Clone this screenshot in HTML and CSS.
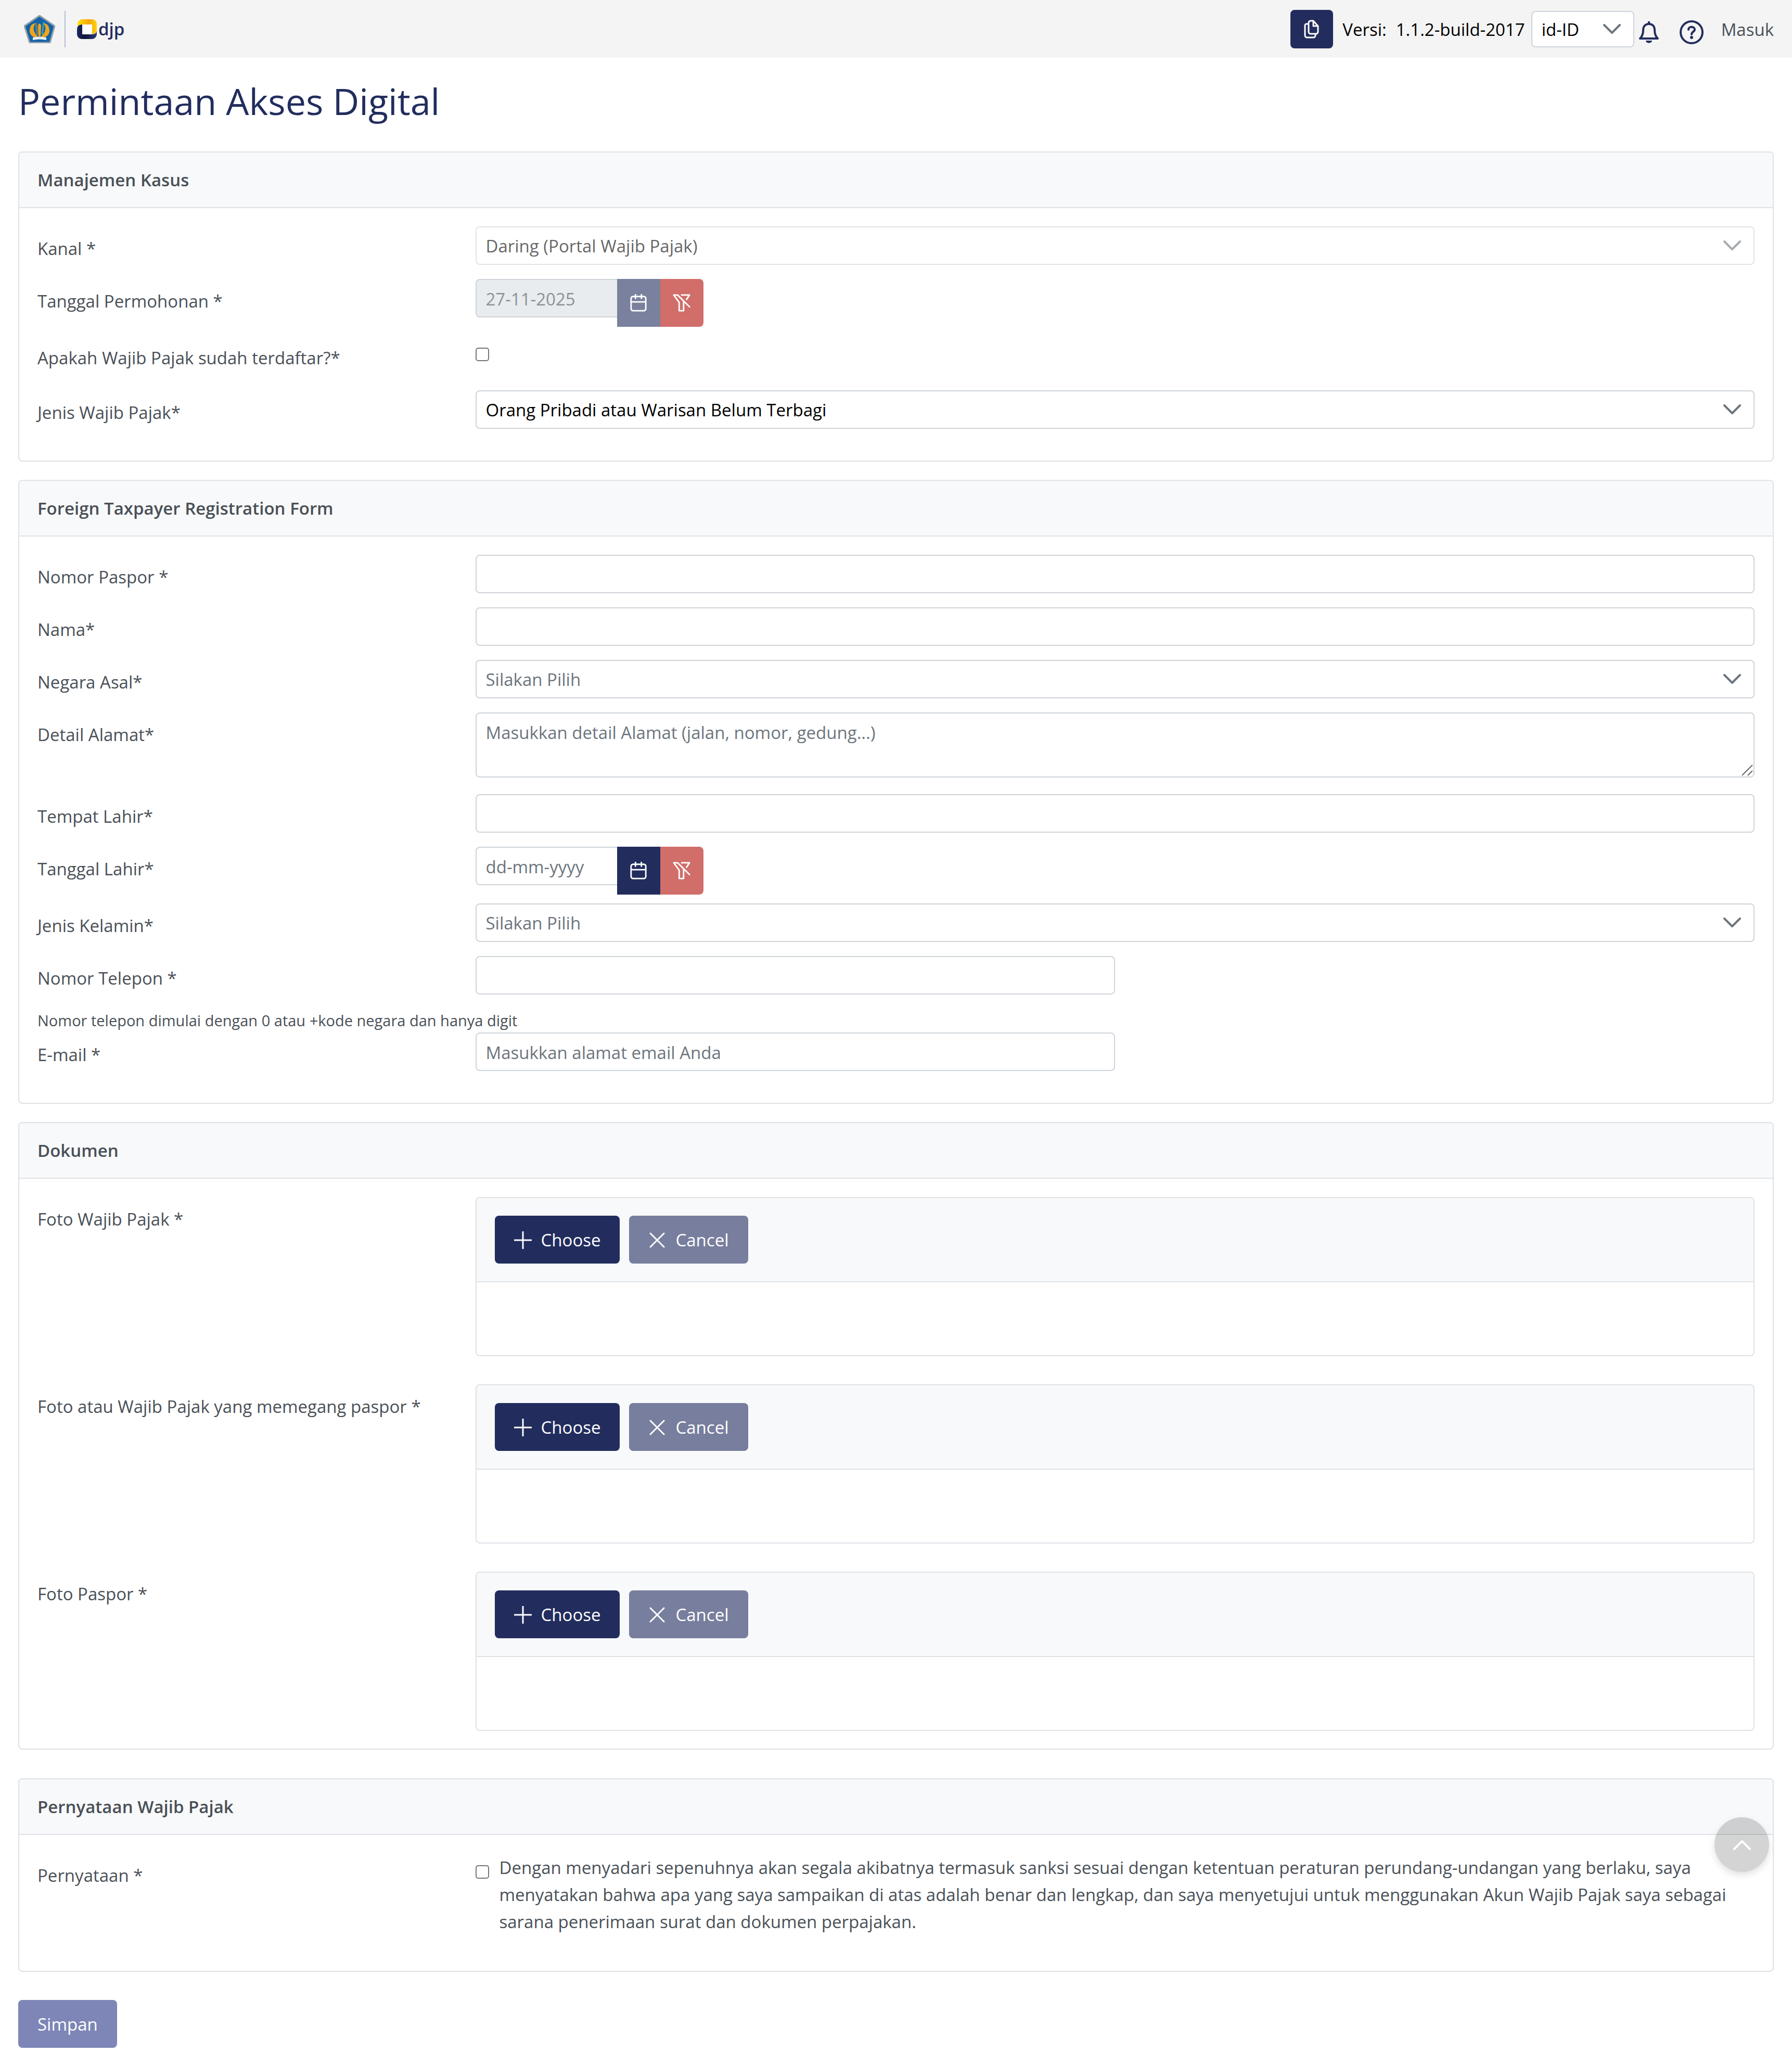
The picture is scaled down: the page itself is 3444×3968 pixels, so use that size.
FILE: index.html
```html
<!DOCTYPE html>
<html lang="id">
<head>
    <meta charset="UTF-8">
    <meta name="viewport" content="width=device-width, initial-scale=1.0">
    <title>Permintaan Akses Digital</title>
    <link rel="stylesheet" href="styles.css">
</head>
<body>

    <!-- Icon sprite -->
    <svg class="sprite" aria-hidden="true">
        <symbol id="icon-chevron" viewBox="0 0 34 20"><path d="M2 2 L17 17 L32 2"/></symbol>
        <symbol id="icon-chevron-up" viewBox="0 0 34 20"><path d="M2 18 L17 3 L32 18"/></symbol>
        <symbol id="icon-plus" viewBox="0 0 34 34"><path d="M17 1 V33 M1 17 H33"/></symbol>
        <symbol id="icon-times" viewBox="0 0 34 34"><path d="M4 4 L30 30 M30 4 L4 30"/></symbol>
        <symbol id="icon-calendar" viewBox="0 0 36 36">
            <path d="M7 5 H29 A4 4 0 0 1 33 9 V30 A4 4 0 0 1 29 34 H7 A4 4 0 0 1 3 30 V9 A4 4 0 0 1 7 5 Z M3 16 H33 M12 1 V9 M24 1 V9"/>
        </symbol>
        <symbol id="icon-filter-slash" viewBox="0 0 36 36">
            <path d="M18 2 H34 L28 11 M34 26 L10 2 H2 L13 17 V34 H22 V15"/>
        </symbol>
        <symbol id="icon-copy" viewBox="0 0 30 36">
            <path d="M18 2 H13 A4 4 0 0 0 9 6 V23 A4 4 0 0 0 13 27 H23 A4 4 0 0 0 27 23 V12 Z M18 2 V12 H27 M9 8 H5 A3 3 0 0 0 2 11 V30 A4 4 0 0 0 6 34 H18 A4 4 0 0 0 22 30 V27"/>
        </symbol>
        <symbol id="icon-bell" viewBox="0 0 38 42">
            <path d="M19 1 V5 M19 5 C11 5 8 11 8 17 C8 25 6 29 2 33 H36 C32 29 30 25 30 17 C30 11 27 5 19 5 Z"/>
            <path class="solid" d="M13 37 H25 C25 43 13 43 13 37 Z"/>
        </symbol>
        <symbol id="icon-question" viewBox="0 0 46 46">
            <circle cx="23" cy="23" r="21"/>
            <path d="M17 18 C17 11 29 11 29 18 C29 22 23 22 23 27"/>
            <circle class="solid" cx="23" cy="33" r="3"/>
        </symbol>
    </svg>

    <header class="topbar">
        <a class="brand" href="#" aria-label="djp">
            <svg class="emblem" viewBox="0 0 60 54">
                <path d="M30 1 L59 21 L50 53 H11 L1 21 Z" fill="#1263a8" stroke="#98a0a8" stroke-width="3"/>
                <path d="M26 42 C17 43 9 35 13 24 Q14 19 20 17 C15 26 19 35 26 42 Z M34 42 C43 43 51 35 47 24 Q46 19 40 17 C45 26 41 35 34 42 Z" fill="#efa41c" stroke="#efa41c" stroke-width="2"/>
                <path d="M27 20 Q30 12 33 20 L32 41 H28 Z" fill="#e9a126"/>
                <path d="M23 15 L26 38" stroke="#67816e" stroke-width="4" fill="none"/>
                <path d="M38 14 L35 38" stroke="#46c3b4" stroke-width="3" stroke-dasharray="2 1" fill="none"/>
                <path d="M17 43 Q30 40 43 43 V48 Q30 45 17 48 Z" fill="#e8eef2"/>
            </svg>
            <span class="brand-divider"></span>
            <svg class="mark" viewBox="0 0 38 38">
                <defs>
                    <linearGradient id="gold" x1="0" y1="0" x2="1" y2="0">
                        <stop offset="0" stop-color="#ffe000"/>
                        <stop offset="0.6" stop-color="#f3a712"/>
                        <stop offset="1" stop-color="#ffd400"/>
                    </linearGradient>
                    <linearGradient id="navy" x1="0" y1="0" x2="1" y2="0">
                        <stop offset="0" stop-color="#1d2760"/>
                        <stop offset="0.4" stop-color="#10143a"/>
                        <stop offset="1" stop-color="#2b3a80"/>
                    </linearGradient>
                </defs>
                <path d="M1 14 V9 A9 9 0 0 1 10 0 H29 A9 9 0 0 1 38 9 V20 Q38 27 29 29 V10 H10 Q3 10 1 14 Z" fill="url(#gold)"/>
                <path d="M10 10 Q0 10 0 20 V29 A9 9 0 0 0 9 38 H29 A9 9 0 0 0 38 29 V22 Q37 29 29 29 H10 Z" fill="url(#navy)"/>
                <path d="M10 10 H29 V29 H10 Z" fill="#fff"/>
            </svg>
            <span class="brand-name">djp</span>
        </a>

        <div class="topbar-right">
            <button class="btn btn-copy" type="button" aria-label="Salin versi">
                <svg class="icon icon-copy"><use href="#icon-copy"/></svg>
            </button>
            <span class="version">Versi:</span>
            <span class="version">1.1.2-build-2017</span>
            <div class="select-wrap lang">
                <select class="control" aria-label="Bahasa">
                    <option>id-ID</option>
                    <option>en-US</option>
                </select>
                <svg class="chevron"><use href="#icon-chevron"/></svg>
            </div>
            <a class="icon-link" href="#" aria-label="Notifikasi"><svg class="icon icon-bell"><use href="#icon-bell"/></svg></a>
            <a class="icon-link icon-link-help" href="#" aria-label="Bantuan"><svg class="icon icon-question"><use href="#icon-question"/></svg></a>
            <a class="login" href="#">Masuk</a>
        </div>
    </header>

    <main class="page">
        <h1>Permintaan Akses Digital</h1>

        <form>
            <section class="panel">
                <h2 class="panel-header">Manajemen Kasus</h2>
                <div class="panel-body">
                    <div class="row">
                        <label for="kanal">Kanal *</label>
                        <div class="select-wrap is-disabled">
                            <select class="control" id="kanal" disabled>
                                <option>Daring (Portal Wajib Pajak)</option>
                            </select>
                            <svg class="chevron"><use href="#icon-chevron"/></svg>
                        </div>
                    </div>
                    <div class="row">
                        <label for="tanggalPermohonan">Tanggal Permohonan *</label>
                        <div class="date-group">
                            <input class="control" type="text" id="tanggalPermohonan" value="27-11-2025" disabled>
                            <button class="btn btn-calendar btn-muted" type="button" aria-label="Pilih tanggal" disabled><svg class="icon"><use href="#icon-calendar"/></svg></button>
                            <button class="btn btn-clear" type="button" aria-label="Hapus tanggal" disabled><svg class="icon"><use href="#icon-filter-slash"/></svg></button>
                        </div>
                    </div>
                    <div class="row row-check">
                        <label for="terdaftar">Apakah Wajib Pajak sudah terdaftar?*</label>
                        <div class="check-cell"><input class="checkbox" type="checkbox" id="terdaftar"></div>
                    </div>
                    <div class="row">
                        <label for="jenisWp">Jenis Wajib Pajak*</label>
                        <div class="select-wrap">
                            <select class="control" id="jenisWp">
                                <option>Orang Pribadi atau Warisan Belum Terbagi</option>
                            </select>
                            <svg class="chevron"><use href="#icon-chevron"/></svg>
                        </div>
                    </div>
                </div>
            </section>

            <section class="panel">
                <h2 class="panel-header">Foreign Taxpayer Registration Form</h2>
                <div class="panel-body">
                    <div class="row">
                        <label for="paspor">Nomor Paspor *</label>
                        <input class="control" type="text" id="paspor">
                    </div>
                    <div class="row">
                        <label for="nama">Nama*</label>
                        <input class="control" type="text" id="nama">
                    </div>
                    <div class="row">
                        <label for="negara">Negara Asal*</label>
                        <div class="select-wrap">
                            <select class="control is-placeholder" id="negara">
                                <option>Silakan Pilih</option>
                            </select>
                            <svg class="chevron"><use href="#icon-chevron"/></svg>
                        </div>
                    </div>
                    <div class="row row-area">
                        <label for="alamat">Detail Alamat*</label>
                        <div class="area-wrap">
                            <textarea class="control" id="alamat" placeholder="Masukkan detail Alamat (jalan, nomor, gedung...)"></textarea>
                            <svg class="grip" viewBox="0 0 22 22"><path d="M1 21 L21 1 M12 21 L21 12"/></svg>
                        </div>
                    </div>
                    <div class="row">
                        <label for="tempatLahir">Tempat Lahir*</label>
                        <input class="control" type="text" id="tempatLahir">
                    </div>
                    <div class="row">
                        <label for="tanggalLahir">Tanggal Lahir*</label>
                        <div class="date-group">
                            <input class="control" type="text" id="tanggalLahir" placeholder="dd-mm-yyyy">
                            <button class="btn btn-calendar" type="button" aria-label="Pilih tanggal"><svg class="icon"><use href="#icon-calendar"/></svg></button>
                            <button class="btn btn-clear" type="button" aria-label="Hapus tanggal"><svg class="icon"><use href="#icon-filter-slash"/></svg></button>
                        </div>
                    </div>
                    <div class="row">
                        <label for="kelamin">Jenis Kelamin*</label>
                        <div class="select-wrap">
                            <select class="control is-placeholder" id="kelamin">
                                <option>Silakan Pilih</option>
                            </select>
                            <svg class="chevron"><use href="#icon-chevron"/></svg>
                        </div>
                    </div>
                    <div class="row">
                        <label for="telepon">Nomor Telepon *</label>
                        <input class="control half" type="tel" id="telepon">
                    </div>
                    <p class="hint">Nomor telepon dimulai dengan 0 atau +kode negara dan hanya digit</p>
                    <div class="row">
                        <label for="email">E-mail *</label>
                        <input class="control half" type="email" id="email" placeholder="Masukkan alamat email Anda">
                    </div>
                </div>
            </section>

            <section class="panel panel-docs">
                <h2 class="panel-header">Dokumen</h2>
                <div class="panel-body">
                    <div class="row">
                        <label for="fotoWp">Foto Wajib Pajak *</label>
                        <div class="upload">
                            <div class="upload-bar">
                                <button class="btn" type="button" id="fotoWp"><svg class="icon"><use href="#icon-plus"/></svg>Choose</button>
                                <button class="btn btn-cancel" type="button" disabled><svg class="icon"><use href="#icon-times"/></svg>Cancel</button>
                            </div>
                            <div class="upload-content"></div>
                        </div>
                    </div>
                    <div class="row">
                        <label for="fotoMemegang">Foto atau Wajib Pajak yang memegang paspor *</label>
                        <div class="upload">
                            <div class="upload-bar">
                                <button class="btn" type="button" id="fotoMemegang"><svg class="icon"><use href="#icon-plus"/></svg>Choose</button>
                                <button class="btn btn-cancel" type="button" disabled><svg class="icon"><use href="#icon-times"/></svg>Cancel</button>
                            </div>
                            <div class="upload-content"></div>
                        </div>
                    </div>
                    <div class="row">
                        <label for="fotoPaspor">Foto Paspor *</label>
                        <div class="upload">
                            <div class="upload-bar">
                                <button class="btn" type="button" id="fotoPaspor"><svg class="icon"><use href="#icon-plus"/></svg>Choose</button>
                                <button class="btn btn-cancel" type="button" disabled><svg class="icon"><use href="#icon-times"/></svg>Cancel</button>
                            </div>
                            <div class="upload-content"></div>
                        </div>
                    </div>
                </div>
            </section>

            <section class="panel panel-statement">
                <h2 class="panel-header">Pernyataan Wajib Pajak</h2>
                <div class="panel-body">
                    <div class="row">
                        <label for="pernyataan">Pernyataan *</label>
                        <div class="statement">
                            <input class="checkbox" type="checkbox" id="pernyataan">
                            <p>Dengan menyadari sepenuhnya akan segala akibatnya termasuk sanksi sesuai dengan ketentuan peraturan perundang-undangan yang berlaku, saya menyatakan bahwa apa yang saya sampaikan di atas adalah benar dan lengkap, dan saya menyetujui untuk menggunakan Akun Wajib Pajak saya sebagai sarana penerimaan surat dan dokumen perpajakan.</p>
                        </div>
                    </div>
                </div>
            </section>

            <button class="btn btn-save" type="submit" disabled>Simpan</button>
        </form>
    </main>

    <button class="scroll-top" type="button" aria-label="Kembali ke atas">
        <svg class="chevron-up"><use href="#icon-chevron-up"/></svg>
    </button>

</body>
</html>
```

FILE: styles.css
```css
* {
    box-sizing: border-box;
}
body {
    font-family: 'Segoe UI', 'Open Sans', 'Noto Sans', sans-serif;
    font-size: 33px;
    line-height: 52px;
    margin: 0;
    background-color: #fff;
    color: #495057;
}
.sprite {
    display: none;
}
svg {
    display: block;
    flex-shrink: 0;
}

/* Top bar */
.topbar {
    display: flex;
    align-items: center;
    justify-content: space-between;
    height: 111px;
    padding: 0 35px 0 46px;
    background-color: #f4f4f4;
}
.brand {
    display: flex;
    align-items: center;
    text-decoration: none;
}
.emblem {
    width: 60px;
    height: 54px;
}
.brand-divider {
    width: 2px;
    height: 70px;
    margin: 0 22px 0 18px;
    background-color: #b4bccf;
}
.mark {
    width: 38px;
    height: 38px;
}
.brand-name {
    margin-left: 3px;
    font-size: 33px;
    font-weight: 600;
    color: #222d5e;
}
.topbar-right {
    display: flex;
    align-items: center;
}
.version {
    margin-left: 18px;
    padding-top: 2px;
    color: #000;
}
.lang {
    width: 198px;
    margin-left: 12px;
}
.topbar .lang .control {
    height: 70px;
}
.icon-link {
    margin-left: 9px;
    padding-top: 12px;
    color: #222d5e;
}
.icon-link-help {
    margin: 0 34px 0 40px;
}
.login {
    padding-top: 2px;
    color: #495057;
    text-decoration: none;
}

/* Icons */
.icon {
    width: 34px;
    height: 34px;
    fill: none;
    stroke: currentColor;
    stroke-width: 3px;
    stroke-linecap: round;
    stroke-linejoin: round;
}
.solid {
    fill: currentColor;
    stroke: none;
}
.icon-copy {
    width: 30px;
    height: 36px;
}
.icon-bell {
    width: 38px;
    height: 42px;
    stroke-width: 4px;
}
.icon-question {
    width: 46px;
    height: 46px;
    stroke-width: 4px;
}

/* Page */
.page {
    padding: 36px 35px;
}
h1 {
    margin: 0 0 50px;
    font-size: 70px;
    font-weight: 400;
    line-height: 94px;
    color: #222d5e;
}
.panel {
    margin-bottom: 35px;
    border: 2px solid #dee2e6;
    border-radius: 8px;
}
.panel-header {
    margin: 0;
    padding: 27px 35px 26px;
    border-bottom: 2px solid #dee2e6;
    background-color: #f8f9fa;
    border-radius: 6px 6px 0 0;
    font-size: 33px;
    font-weight: 600;
    line-height: 52px;
}
.panel-body {
    padding: 35px 35px 34px;
}
.row {
    display: grid;
    grid-template-columns: minmax(0, 1fr) minmax(0, 3fr);
    column-gap: 22px;
    align-items: start;
    min-height: 84px;
    margin-bottom: 17px;
}
.row > label {
    padding-top: 17px;
}
.row-check {
    min-height: 88px;
}
.row-area {
    min-height: 140px;
}
.hint {
    margin: 0;
    font-size: 29px;
    line-height: 46px;
}

/* Form controls */
.control {
    display: block;
    width: 100%;
    height: 74px;
    padding: 2px 18px 0;
    border: 2px solid #ced4da;
    border-radius: 8px;
    background-color: #fff;
    color: #000;
    font-family: inherit;
    font-size: 33px;
    line-height: 52px;
    outline: none;
    appearance: none;
}
.control::placeholder {
    color: #6c757d;
    opacity: 1;
}
.control.is-placeholder {
    color: #6c757d;
}
.control:disabled {
    opacity: 1;
}
.half {
    width: 50%;
}
.select-wrap {
    position: relative;
}
.chevron {
    position: absolute;
    top: 50%;
    right: 26px;
    width: 34px;
    height: 20px;
    margin-top: -10px;
    fill: none;
    stroke: #6c757d;
    stroke-width: 4px;
    stroke-linecap: round;
    stroke-linejoin: round;
    pointer-events: none;
}
.is-disabled {
    opacity: 0.6;
}
.area-wrap {
    position: relative;
}
textarea.control {
    height: 125px;
    padding: 11px 18px;
    resize: none;
}
.grip {
    position: absolute;
    right: 3px;
    bottom: 3px;
    width: 22px;
    height: 22px;
    fill: none;
    stroke: #666;
    stroke-width: 2px;
}
.date-group {
    display: flex;
    align-items: flex-start;
}
.date-group .control {
    width: 272px;
    border-right: none;
    border-radius: 8px 0 0 8px;
}
.date-group .control:disabled {
    background-color: #e9ecef;
    color: #8d9195;
}
.checkbox {
    display: block;
    flex-shrink: 0;
    width: 26px;
    height: 26px;
    margin: 0;
    border: 2px solid #767676;
    border-radius: 5px;
    background-color: #fff;
    appearance: none;
}
.check-cell {
    padding-top: 23px;
}

/* Buttons */
.btn {
    display: flex;
    align-items: center;
    gap: 18px;
    height: 92px;
    padding: 2px 37px 0;
    border: none;
    border-radius: 8px;
    background-color: #222d5e;
    color: #fff;
    font-family: inherit;
    font-size: 33px;
    line-height: 52px;
    cursor: pointer;
}
.btn:disabled {
    cursor: default;
}
.btn-copy {
    width: 82px;
    height: 74px;
    padding: 0;
    justify-content: center;
}
.btn-calendar,
.btn-clear {
    width: 83px;
    padding: 0;
    justify-content: center;
    border-radius: 0;
}
.btn-muted {
    background-color: #7a819e;
}
.btn-clear {
    background-color: #d16e69;
    border-radius: 0 8px 8px 0;
}
.btn-cancel {
    background-color: #787e9d;
}
.btn-save {
    background-color: #7d86b7;
}

/* Uploads */
.upload {
    border: 2px solid #dee2e6;
    border-radius: 8px;
}
.upload-bar {
    display: flex;
    gap: 18px;
    padding: 34px 35px;
    border-bottom: 2px solid #dee2e6;
    background-color: #f8f9fa;
    border-radius: 6px 6px 0 0;
}
.upload-content {
    height: 140px;
}
.panel-docs {
    margin-bottom: 55px;
}
.panel-docs .row {
    margin-bottom: 54px;
}
.panel-docs .row:last-child {
    margin-bottom: 0;
}

/* Statement */
.panel-statement {
    margin-bottom: 54px;
}
.statement {
    display: flex;
    gap: 20px;
    padding: 2px 0 17px;
}
.statement .checkbox {
    margin-top: 21px;
}
.statement p {
    margin: 0;
}

.scroll-top {
    position: fixed;
    right: 44px;
    bottom: 371px;
    display: flex;
    align-items: center;
    justify-content: center;
    width: 105px;
    height: 105px;
    padding: 0;
    border: none;
    border-radius: 50%;
    background-color: rgba(0, 0, 0, 0.17);
    box-shadow: 0 6px 14px rgba(0, 0, 0, 0.12);
}
.chevron-up {
    width: 34px;
    height: 20px;
    fill: none;
    stroke: #fff;
    stroke-width: 4px;
    stroke-linecap: round;
    stroke-linejoin: round;
}
```
